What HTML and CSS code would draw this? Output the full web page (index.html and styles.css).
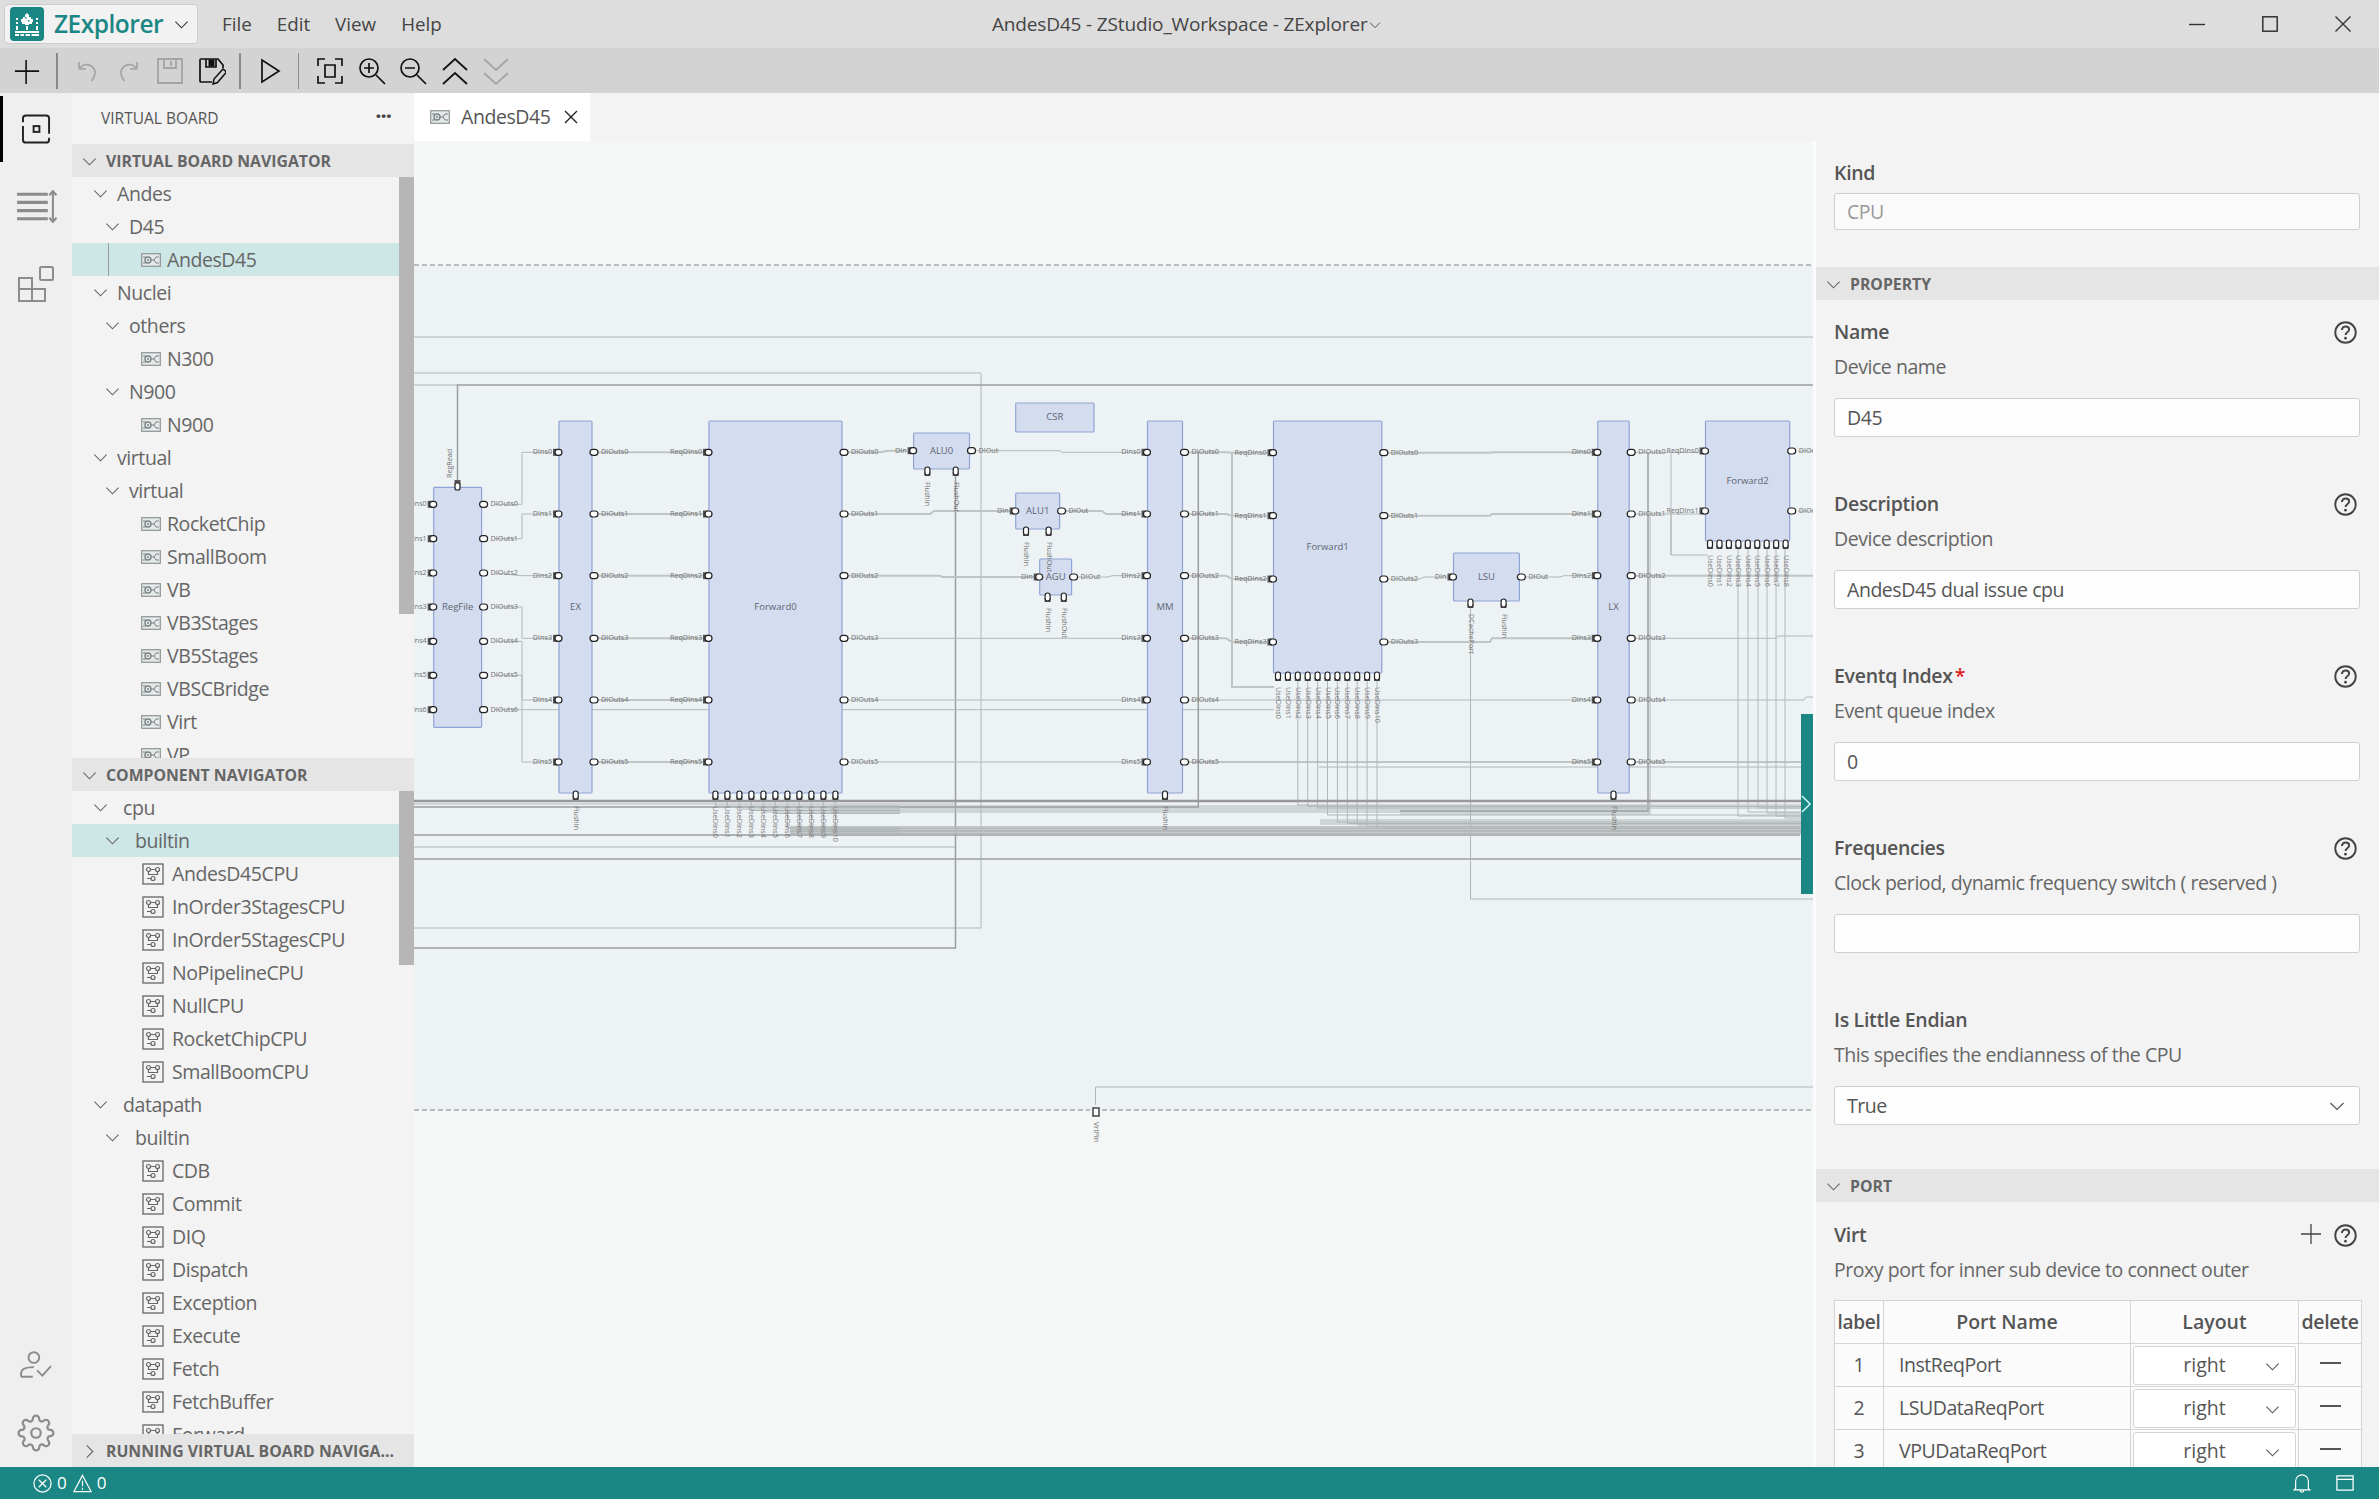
FILE: index.html
```html
<!DOCTYPE html>
<html lang="en">
<head>
<meta charset="utf-8">
<title>AndesD45 - ZStudio_Workspace - ZExplorer</title>
<link rel="stylesheet" href="styles.css">
</head>
<body>
<svg class="defs" width="0" height="0" aria-hidden="true">
  <symbol id="chev-d" viewBox="0 0 16 16"><path d="M1.5 5 8 11.5 14.5 5" fill="none" stroke="currentColor" stroke-width="1.2"/></symbol>
  <symbol id="chev-r" viewBox="0 0 16 16"><path d="M5 1.5 11.5 8 5 14.5" fill="none" stroke="currentColor" stroke-width="1.2"/></symbol>
  <symbol id="chip" viewBox="0 0 20 14"><rect x=".7" y=".7" width="18.6" height="12.6" fill="#e4e8e8" stroke="#8d9494" stroke-width="1.2"/><circle cx="7" cy="7" r="3" fill="none" stroke="#7d8484" stroke-width="1.4"/><circle cx="7" cy="7" r="1" fill="#7d8484"/><path d="M2 4h3M2 10h3M10 7h3l2-3h3M13 7l2 3h3" fill="none" stroke="#7d8484"/></symbol>
  <symbol id="comp" viewBox="0 0 22 22"><rect x="1" y="1" width="20" height="20" fill="none" stroke="#666" stroke-width="1.3"/><circle cx="6.5" cy="6.5" r="2" fill="none" stroke="#666" stroke-width="1.2"/><circle cx="15.5" cy="6.5" r="2" fill="none" stroke="#666" stroke-width="1.2"/><circle cx="11" cy="15.500" r="2" fill="none" stroke="#666" stroke-width="1.2"/><path d="M8.5 6.500h5M6.500 8.500v3h9v-3M9 15.500H5" fill="none" stroke="#666" stroke-width="1.2"/></symbol>
  <symbol id="help" viewBox="0 0 22 22"><circle cx="11" cy="11" r="9.8" fill="none" stroke="#444" stroke-width="1.8"/><path d="M7.600 8.600c0-2 1.500-3.400 3.500-3.400s3.400 1.200 3.400 3c0 2.700-3.500 2.500-3.500 5.200" fill="none" stroke="#444" stroke-width="1.9"/><circle cx="11" cy="16.400" r="1.300" fill="#444"/></symbol>
</svg>

<div class="app">
  <header class="titlebar">
    <div class="brand">
      <svg class="logo" viewBox="0 0 34 34"><rect width="34" height="34" rx="4" fill="#1b8784"/><g fill="#fff"><path d="M17 6l2 2v2h2v2h2v3h-1v2h-3v1h-4v-1h-3v-2h-1v-3h2v-2h2V8z"/><rect x="6" y="11" width="2" height="2"/><rect x="6" y="15" width="2" height="2"/><rect x="26" y="11" width="2" height="2"/><rect x="26" y="15" width="2" height="2"/><rect x="16" y="19" width="2" height="4"/><rect x="6" y="19" width="2" height="4"/><rect x="26" y="19" width="2" height="4"/><rect x="5" y="24" width="24" height="2"/><rect x="5" y="27" width="24" height="2"/></g><g fill="#1b8784"><rect x="15" y="10" width="1.500" height="1.500"/><rect x="18" y="13" width="1.500" height="1.500"/><rect x="9" y="27" width="1.500" height="2"/><rect x="14" y="27" width="1.500" height="2"/><rect x="20" y="27" width="1.500" height="2"/></g></svg>
      <span class="brand-name">ZExplorer</span>
      <svg class="brand-chev"><use href="#chev-d"/></svg>
    </div>
    <nav class="menu"><span>File</span><span>Edit</span><span>View</span><span>Help</span></nav>
    <div class="doc-title">AndesD45 - ZStudio_Workspace - ZExplorer<svg class="title-chev"><use href="#chev-d"/></svg></div>
    <div class="winctl">
      <svg viewBox="0 0 16 16"><path d="M0 8.500h16" stroke="#333" stroke-width="1.400"/></svg>
      <svg viewBox="0 0 16 16"><rect x=".8" y=".8" width="14.400" height="14.400" fill="none" stroke="#333" stroke-width="1.500"/></svg>
      <svg viewBox="0 0 16 16"><path d="M.5.500l15 15M15.500.500l-15 15" stroke="#333" stroke-width="1.400"/></svg>
    </div>
  </header>

  <div class="toolbar">
    <svg class="tb"><path d="M13 1v26M1 13h26" stroke="#111" stroke-width="1.700" fill="none" transform="translate(2 2) scale(.93)"/></svg>
    <i class="sep"></i>
    <svg class="tb off"><path d="M5 11V4M5 11h7M5.500 10.500C9 6 14 5.500 18 8.500c4.500 3.500 3.500 10-.5 14.500" transform="translate(1 1)"/></svg>
    <svg class="tb off"><path d="M23 11V4M23 11h-7M22.500 10.500C19 6 14 5.500 10 8.500c-4.500 3.500-3.500 10 .5 14.500" transform="translate(-1 1)"/></svg>
    <svg class="tb off"><path d="M2 2h24v24H2zM8 2v9h12V2M15 4v5" stroke-width="1.800"/></svg>
    <svg class="tb dark"><path d="M14 25H3a1 1 0 0 1-1-1V3a1 1 0 0 1 1-1h17l5 6v3M8 2v8h10V2" stroke-width="1.700"/><rect x="11" y="3" width="5" height="6" fill="#111"/><path d="M15 27l1-5 9-10 3.500 3-9 10.500z" stroke-width="1.500"/></svg>
    <i class="sep"></i>
    <svg class="tb dark"><path d="M6 3v22l17-11z" stroke-width="1.700"/></svg>
    <i class="sep thin"></i>
    <svg class="tb dark"><path d="M2 9V2h7M19 2h7v7M26 19v7h-7M9 26H2v-7M9 8h10v12H9z" stroke-width="1.700"/></svg>
    <svg class="tb dark"><circle cx="11" cy="11" r="9" stroke-width="1.700"/><path d="M11 6v10M6 11h10M18 18l9 9" stroke-width="1.700"/></svg>
    <svg class="tb dark"><circle cx="11" cy="11" r="9" stroke-width="1.700"/><path d="M6 11h10M18 18l9 9" stroke-width="1.700"/></svg>
    <svg class="tb dark"><path d="M2 13 14 2l12 11M2 27l12-11 12 11" stroke-width="1.700"/></svg>
    <svg class="tb off"><path d="M2 2l12 11L26 2M2 16l12 11 12-11" stroke-width="1.700"/></svg>
  </div>

  <main class="main">
    <aside class="activity">
      <div class="act-item active"><svg viewBox="0 0 30 30"><path d="M4 1h21a3 3 0 0 1 3 3v16M28 24v2a3 3 0 0 1-3 3H4a3 3 0 0 1-3-3V12M1 8V4a3 3 0 0 1 3-3" fill="none" stroke="#222" stroke-width="2"/><rect x="12" y="12" width="6" height="6" fill="none" stroke="#222" stroke-width="2"/></svg></div>
      <div class="act-item"><svg viewBox="0 0 40 32"><path d="M1 4h30M1 12h30M1 20h30M1 28h30" stroke="#8c8c8c" stroke-width="3"/><path d="M36 1v30M32.500 5 36 1l3.500 4M32.500 27l3.500 4 3.500-4" stroke="#8c8c8c" stroke-width="2" fill="none"/></svg></div>
      <div class="act-item"><svg viewBox="0 0 36 36"><path d="M1 12h13v11h13v12H1zM1 23h13v12" fill="none" stroke="#8c8c8c" stroke-width="2"/><rect x="22" y="1" width="13" height="13" rx="1.500" fill="none" stroke="#8c8c8c" stroke-width="2"/></svg></div>
      <div class="act-spacer"></div>
      <div class="act-item small"><svg viewBox="0 0 30 26"><circle cx="13" cy="6" r="5" fill="none" stroke="#8c8c8c" stroke-width="1.800"/><path d="M1 24v-3c0-4 4-6 12-6M1 24h11M16 18l5 5 8-9" fill="none" stroke="#8c8c8c" stroke-width="1.800"/></svg></div>
      <div class="act-item small"><svg viewBox="0 0 24 24"><path fill="none" stroke="#8c8c8c" stroke-width="1.400" d="M19.400 15a1.650 1.650 0 0 0 .33 1.820l.06.06a2 2 0 0 1 0 2.830 2 2 0 0 1-2.830 0l-.06-.06a1.650 1.650 0 0 0-1.820-.33 1.650 1.650 0 0 0-1 1.510V21a2 2 0 0 1-2 2 2 2 0 0 1-2-2v-.09A1.650 1.650 0 0 0 9 19.400a1.650 1.650 0 0 0-1.820.33l-.06.06a2 2 0 0 1-2.830 0 2 2 0 0 1 0-2.830l.06-.06a1.650 1.650 0 0 0 .33-1.820 1.650 1.650 0 0 0-1.510-1H3a2 2 0 0 1-2-2 2 2 0 0 1 2-2h.09A1.650 1.650 0 0 0 4.600 9a1.650 1.650 0 0 0-.33-1.820l-.06-.06a2 2 0 0 1 0-2.830 2 2 0 0 1 2.830 0l.06.06a1.650 1.650 0 0 0 1.820.33H9a1.650 1.650 0 0 0 1-1.510V3a2 2 0 0 1 2-2 2 2 0 0 1 2 2v.09a1.650 1.650 0 0 0 1 1.510 1.650 1.650 0 0 0 1.820-.33l.06-.06a2 2 0 0 1 2.830 0 2 2 0 0 1 0 2.830l-.06.06a1.650 1.650 0 0 0-.33 1.820V9a1.650 1.650 0 0 0 1.510 1H21a2 2 0 0 1 2 2 2 2 0 0 1-2 2h-.09a1.650 1.650 0 0 0-1.510 1z"/><circle cx="12" cy="12" r="3" fill="none" stroke="#8c8c8c" stroke-width="1.400"/></svg></div>
    </aside>

    <section class="sidebar">
      <div class="side-head"><span>VIRTUAL BOARD</span><b class="dots">···</b></div>
      <div class="sect"><svg class="ch"><use href="#chev-d"/></svg>VIRTUAL BOARD NAVIGATOR</div>
      <div class="tree tree-a">
        <i class="thumb thumb-a"></i>
        <div class="row p1"><svg class="ch"><use href="#chev-d"/></svg>Andes</div>
        <div class="row p2"><svg class="ch"><use href="#chev-d"/></svg>D45</div>
        <div class="row leaf sel guide"><svg class="chip"><use href="#chip"/></svg>AndesD45</div>
        <div class="row p1"><svg class="ch"><use href="#chev-d"/></svg>Nuclei</div>
        <div class="row p2"><svg class="ch"><use href="#chev-d"/></svg>others</div>
        <div class="row leaf"><svg class="chip"><use href="#chip"/></svg>N300</div>
        <div class="row p2"><svg class="ch"><use href="#chev-d"/></svg>N900</div>
        <div class="row leaf"><svg class="chip"><use href="#chip"/></svg>N900</div>
        <div class="row p1"><svg class="ch"><use href="#chev-d"/></svg>virtual</div>
        <div class="row p2"><svg class="ch"><use href="#chev-d"/></svg>virtual</div>
        <div class="row leaf"><svg class="chip"><use href="#chip"/></svg>RocketChip</div>
        <div class="row leaf"><svg class="chip"><use href="#chip"/></svg>SmallBoom</div>
        <div class="row leaf"><svg class="chip"><use href="#chip"/></svg>VB</div>
        <div class="row leaf"><svg class="chip"><use href="#chip"/></svg>VB3Stages</div>
        <div class="row leaf"><svg class="chip"><use href="#chip"/></svg>VB5Stages</div>
        <div class="row leaf"><svg class="chip"><use href="#chip"/></svg>VBSCBridge</div>
        <div class="row leaf"><svg class="chip"><use href="#chip"/></svg>Virt</div>
        <div class="row leaf"><svg class="chip"><use href="#chip"/></svg>VP</div>
      </div>
      <div class="sect"><svg class="ch"><use href="#chev-d"/></svg>COMPONENT NAVIGATOR</div>
      <div class="tree tree-b">
        <i class="thumb thumb-b"></i>
        <div class="row q1"><svg class="ch"><use href="#chev-d"/></svg>cpu</div>
        <div class="row q2 sel"><svg class="ch"><use href="#chev-d"/></svg>builtin</div>
        <div class="row cleaf"><svg class="comp"><use href="#comp"/></svg>AndesD45CPU</div>
        <div class="row cleaf"><svg class="comp"><use href="#comp"/></svg>InOrder3StagesCPU</div>
        <div class="row cleaf"><svg class="comp"><use href="#comp"/></svg>InOrder5StagesCPU</div>
        <div class="row cleaf"><svg class="comp"><use href="#comp"/></svg>NoPipelineCPU</div>
        <div class="row cleaf"><svg class="comp"><use href="#comp"/></svg>NullCPU</div>
        <div class="row cleaf"><svg class="comp"><use href="#comp"/></svg>RocketChipCPU</div>
        <div class="row cleaf"><svg class="comp"><use href="#comp"/></svg>SmallBoomCPU</div>
        <div class="row q1"><svg class="ch"><use href="#chev-d"/></svg>datapath</div>
        <div class="row q2"><svg class="ch"><use href="#chev-d"/></svg>builtin</div>
        <div class="row cleaf"><svg class="comp"><use href="#comp"/></svg>CDB</div>
        <div class="row cleaf"><svg class="comp"><use href="#comp"/></svg>Commit</div>
        <div class="row cleaf"><svg class="comp"><use href="#comp"/></svg>DIQ</div>
        <div class="row cleaf"><svg class="comp"><use href="#comp"/></svg>Dispatch</div>
        <div class="row cleaf"><svg class="comp"><use href="#comp"/></svg>Exception</div>
        <div class="row cleaf"><svg class="comp"><use href="#comp"/></svg>Execute</div>
        <div class="row cleaf"><svg class="comp"><use href="#comp"/></svg>Fetch</div>
        <div class="row cleaf"><svg class="comp"><use href="#comp"/></svg>FetchBuffer</div>
        <div class="row cleaf"><svg class="comp"><use href="#comp"/></svg>Forward</div>
      </div>
      <div class="sect"><svg class="ch"><use href="#chev-r"/></svg>RUNNING VIRTUAL BOARD NAVIGA...</div>
    </section>

    <section class="editor">
      <div class="tabs">
        <div class="tab"><svg class="chip"><use href="#chip"/></svg><span>AndesD45</span><svg class="tab-x" viewBox="0 0 14 14"><path d="M1 1l12 12M13 1 1 13" stroke="#222" stroke-width="1.400"/></svg></div>
      </div>
      <div class="canvas">
        <svg id="diagram" class="diagram" viewBox="414 141 1399 1326"></svg>
        <div class="handle"><svg viewBox="0 0 12 20"><path d="M1 1l9 9-9 9" fill="none" stroke="#dff" stroke-width="1.500"/></svg></div>
      </div>
    </section>

    <aside class="props">
      <div class="kind">
        <div class="lbl">Kind</div>
        <div class="input ro">CPU</div>
      </div>
      <div class="sect pad"><svg class="ch"><use href="#chev-d"/></svg>PROPERTY</div>
      <div class="groups">
        <div class="group">
          <div class="lbl">Name<svg class="help"><use href="#help"/></svg></div>
          <div class="sub">Device name</div>
          <div class="input">D45</div>
        </div>
        <div class="group">
          <div class="lbl">Description<svg class="help"><use href="#help"/></svg></div>
          <div class="sub">Device description</div>
          <div class="input">AndesD45 dual issue cpu</div>
        </div>
        <div class="group">
          <div class="lbl">Eventq Index<em>*</em><svg class="help"><use href="#help"/></svg></div>
          <div class="sub">Event queue index</div>
          <div class="input">0</div>
        </div>
        <div class="group">
          <div class="lbl">Frequencies<svg class="help"><use href="#help"/></svg></div>
          <div class="sub">Clock period, dynamic frequency switch ( reserved )</div>
          <div class="input"></div>
        </div>
        <div class="group last">
          <div class="lbl">Is Little Endian</div>
          <div class="sub">This specifies the endianness of the CPU</div>
          <div class="input sel-input">True<svg class="sel-ch"><use href="#chev-d"/></svg></div>
        </div>
      </div>
      <div class="sect pad"><svg class="ch"><use href="#chev-d"/></svg>PORT</div>
      <div class="groups port">
        <div class="lbl">Virt<svg class="plus" viewBox="0 0 20 20"><path d="M10 0v20M0 10h20" stroke="#444" stroke-width="1.300"/></svg><svg class="help"><use href="#help"/></svg></div>
        <div class="sub">Proxy port for inner sub device to connect outer</div>
        <table class="ports">
          <thead><tr><th class="c1">label</th><th class="c2">Port Name</th><th class="c3">Layout</th><th class="c4">delete</th></tr></thead>
          <tbody>
            <tr><td class="num">1</td><td class="name">InstReqPort</td><td class="lay"><div class="mini">right<svg><use href="#chev-d"/></svg></div></td><td class="del"><i></i></td></tr>
            <tr><td class="num">2</td><td class="name">LSUDataReqPort</td><td class="lay"><div class="mini">right<svg><use href="#chev-d"/></svg></div></td><td class="del"><i></i></td></tr>
            <tr><td class="num">3</td><td class="name">VPUDataReqPort</td><td class="lay"><div class="mini">right<svg><use href="#chev-d"/></svg></div></td><td class="del"><i></i></td></tr>
          </tbody>
        </table>
      </div>
    </aside>
  </main>

  <footer class="status">
    <svg class="st-ic" viewBox="0 0 20 20"><circle cx="10" cy="10" r="9" fill="none" stroke="#fff" stroke-width="1.300"/><path d="M6 6l8 8M14 6l-8 8" stroke="#fff" stroke-width="1.300"/></svg><span>0</span>
    <svg class="st-ic" viewBox="0 0 20 20"><path d="M10 1.500 19 18.500H1zM10 7v6M10 14.500v2" fill="none" stroke="#fff" stroke-width="1.300"/></svg><span>0</span>
    <div class="st-right">
      <svg viewBox="0 0 18 22"><path d="M2 17V9a7 7 0 0 1 14 0v8l1.500 1.500h-17zM7 19a2 2 0 0 0 4 0" fill="none" stroke="#fff" stroke-width="1.300"/></svg>
      <svg viewBox="0 0 20 20"><path d="M1 2h18v16H1zM1 6h18" fill="none" stroke="#fff" stroke-width="1.400"/></svg>
    </div>
  </footer>
</div>
<script src="app.js"></script>
</body>
</html>
```

FILE: styles.css
```css
* { box-sizing: border-box; }
html, body { margin: 0; height: 100%; overflow: hidden; }
body { font: 20px/1.2 "Open Sans", "Noto Sans", sans-serif; color: #555; background: #f3f3f3; }
.defs { position: absolute; }
.app { display: flex; flex-direction: column; height: 100vh; }

.titlebar { height: 48px; flex: none; background: #dddddd; display: flex; align-items: center; position: relative; padding-left: 4px; }
.brand { width: 194px; height: 40px; background: #f2f2f2; border: 1px solid #ccc; border-radius: 4px; display: flex; align-items: center; padding-left: 5px; }
.logo { width: 34px; height: 34px; flex: none; }
.brand-name { font-weight: 600; font-size: 24.500px; color: #1b8784; margin-left: 10px; letter-spacing: -.5px; }
.brand-chev { width: 15px; height: 15px; margin-left: 11px; color: #333; }
.menu { display: flex; gap: 0; margin-left: 24px; color: #444; font-size: 18.800px; }
.menu span { margin-right: 25px; }
.doc-title { position: absolute; left: 992px; top: 13px; font-size: 19px; color: #444; white-space: nowrap; letter-spacing: -.15px; }
.title-chev { width: 12px; height: 12px; color: #444; margin-left: 1px; }
.winctl { margin-left: auto; display: flex; gap: 57px; padding-right: 28px; }
.winctl svg { width: 16px; height: 16px; }

.toolbar { height: 45px; flex: none; background: #d3d3d3; display: flex; align-items: center; padding-left: 12px; }
.tb { width: 28px; height: 28px; margin-right: 13.600px; flex: none; fill: none; }
.tb.off { stroke: #a4a4a4; stroke-width: 1.700; }
.tb.dark { stroke: #111; }
.tb:first-child { margin-right: 16px; }
.sep { width: 2px; height: 36px; background: #8a8a8a; margin-right: 15px; flex: none; }
.sep.thin { width: 1px; margin: 0 17px 0 0; }

.main { flex: 1; min-height: 0; display: flex; }
.activity { width: 72px; flex: none; background: #efefef; display: flex; flex-direction: column; }
.act-item { height: 78px; display: flex; align-items: center; justify-content: center; position: relative; }
.act-item svg { width: 29px; height: 30px; }
.act-item:nth-child(2) { margin-top: 2px; }
.act-item:nth-child(2) svg { width: 41px; height: 33px; }
.act-item:nth-child(3) svg { width: 36px; height: 36px; }
.act-item.active { margin-top: 0; height: 72px; }
.act-item.active::before { content: ""; position: absolute; left: 0; top: 3px; width: 3px; height: 66px; background: #000; }
.act-spacer { flex: 1; }
.act-item.small { height: 68px; }
.act-item.small svg { width: 32px; height: 34px; }
.act-item.small:last-child svg { width: 38px; height: 40px; }

.sidebar { width: 342px; flex: none; background: #f3f3f3; display: flex; flex-direction: column; }
.side-head { height: 51px; display: flex; align-items: center; justify-content: space-between; padding: 0 23px 0 29px; font-size: 15.500px; color: #555; }
.dots { font-size: 22px; letter-spacing: -1px; color: #444; font-weight: 700; margin-top: -6px; }
.sect { height: 33px; flex: none; background: #e5e5e5; display: flex; align-items: center; font-weight: 700; font-size: 15.800px; color: #666; padding-left: 10px; padding-top: 1px; white-space: nowrap; }
.sect .ch { margin-right: 9px; }
.sect.pad { padding-left: 10px; }
.ch { width: 15px; height: 15px; color: #666; flex: none; }
.tree { position: relative; overflow: hidden; flex: none; }
.tree-a { height: 581px; }
.tree-b { height: 643px; }
.thumb { position: absolute; right: 0; top: 0; width: 15px; background: #b6b6b6; z-index: 2; }
.thumb-a { height: 437px; }
.thumb-b { height: 174px; }
.row { height: 33px; display: flex; align-items: center; white-space: nowrap; font-size: 19.500px; color: #666; position: relative; letter-spacing: -.42px; }
.row .ch { margin-right: 9px; }
.p1 { padding-left: 21px; }
.p2 { padding-left: 33px; }
.q1 { padding-left: 21px; }
.q2 { padding-left: 33px; }
.row.q2 .ch, .row.q1 .ch { margin-right: 15px; }
.leaf { padding-left: 69px; }
.cleaf { padding-left: 70px; }
.chip { width: 20px; height: 14px; margin-right: 6px; flex: none; }
.comp { width: 22px; height: 22px; margin-right: 8px; flex: none; }
.sel { background: #cde6e6; }
.guide::before { content: ""; position: absolute; left: 36px; top: 0; bottom: 0; width: 1px; background: #999; }

.editor { width: 1402px; flex: none; display: flex; flex-direction: column; min-height: 0; }
.tabs { height: 48px; flex: none; background: #f3f3f3; display: flex; }
.tab { width: 176px; background: #fff; display: flex; align-items: center; padding-left: 16px; font-size: 19.500px; color: #555; }
.tab span { margin-left: 5px; letter-spacing: -.42px; }
.tab-x { width: 14px; height: 14px; margin-left: 13px; }
.canvas { flex: 1; min-height: 0; position: relative; background: #f3f7f6; border-right: 3px solid #fbfbfb; }
.diagram { display: block; width: 1399px; height: 1326px; }
.handle { position: absolute; right: 0; top: 573px; width: 12px; height: 180px; background: #1b8784; display: flex; align-items: center; }
.handle svg { width: 11px; height: 18px; }

.props { flex: 1; min-width: 0; overflow: hidden; background: #f3f3f3; display: flex; flex-direction: column; }
.kind { height: 174px; flex: none; padding: 62px 19px 0 18px; }
.kind .input { margin-top: 4px; height: 37px; }
.groups { padding: 14px 19px 0 18px; flex: none; }
.group { margin-bottom: 49px; }
.group.last { margin-bottom: 44px; }
.lbl { height: 34px; padding-top: 1px; display: flex; align-items: center; font-weight: 600; font-size: 19.500px; color: #555; position: relative; letter-spacing: -.3px; }
.lbl em { color: #e02020; font-style: normal; margin-left: 2px; }
.help { width: 23px; height: 23px; position: absolute; right: 3px; top: 7px; }
.plus { width: 20px; height: 20px; position: absolute; right: 39px; top: 7px; }
.sub { height: 34px; margin-top: 1px; padding-top: 1px; display: flex; align-items: center; font-size: 19.500px; color: #666; letter-spacing: -.45px; white-space: nowrap; }
.input { height: 39px; margin-top: 15px; background: #fdfdfd; border: 1.500px solid #cfcfcf; border-radius: 3px; padding-left: 12px; display: flex; align-items: center; color: #555; font-size: 19.500px; letter-spacing: -.45px; }
.input.ro { background: #fafafa; color: #999; }
.sel-input { justify-content: space-between; padding-right: 14px; }
.sel-ch { width: 16px; height: 16px; color: #555; }
.port { padding-top: 15px; }
.ports { border-collapse: collapse; table-layout: fixed; width: 527px; margin-top: 14px; background: #fbfbfb; font-size: 19.500px; }
.ports th, .ports td { border: 1.500px solid #d4d4d4; padding: 0; height: 43px; font-weight: 600; color: #555; white-space: nowrap; }
.ports td { font-weight: 400; }
.c1 { width: 49px; font-size: 19px; letter-spacing: -.3px; }
.c2 { width: 247px; }
.c3 { width: 168px; }
.c4 { width: 63px; letter-spacing: -.3px; }
.num { text-align: center; }
.name { padding-left: 15px !important; letter-spacing: -.45px; }
.lay { padding: 1px 2px !important; }
.mini { height: 39px; border: 1.500px solid #d4d4d4; border-radius: 3px; background: #fff; display: flex; align-items: center; justify-content: center; position: relative; padding-right: 20px; }
.mini svg { position: absolute; right: 15px; top: 12px; width: 15px; height: 15px; color: #555; }
.del { text-align: center; vertical-align: top; }
.del i { display: block; width: 21px; height: 2px; background: #555; margin: 18px auto 0; }

.status { height: 32px; flex: none; background: #1b8784; color: #fff; display: flex; align-items: center; padding-left: 33px; font-size: 17px; }
.st-ic { width: 19px; height: 19px; margin-right: 5px; }
.status span { margin-right: 6px; }
.st-right { margin-left: auto; display: flex; gap: 25px; padding-right: 25px; align-items: center; }
.st-right svg { width: 18px; height: 20px; }

.lbl-d { font: 7.200px "Open Sans", sans-serif; fill: #727272; }
.name-d { font: 9.500px "Open Sans", sans-serif; fill: #5f6672; text-anchor: middle; dominant-baseline: middle; }
.box { fill: #d4dcef; stroke: #8fa3d6; stroke-width: 1.200; }
.w { fill: none; stroke: #b2b8b9; stroke-width: 1; }
.w2 { fill: none; stroke: #bfc4c5; stroke-width: 2; }
.wd { fill: none; stroke: #9a9e9f; stroke-width: 1.500; }
.wD { fill: none; stroke: #999; stroke-width: 2.500; }
.wb { fill: none; stroke: #b5b9ba; stroke-width: 1.600; }
.dash { fill: none; stroke: #aaa; stroke-width: 1.500; stroke-dasharray: 5 3; }
.band { fill: #edf2f5; }
.pin { fill: #fff; stroke: #222; stroke-width: 1.200; }
.pin-bg { fill: #555; }
```

FILE: app.js
```js
(function () {
  var s = [];
  function P(pts, c) { s.push('<polyline class="' + (c || 'w') + '" points="' + pts.join(' ') + '"/>'); }
  function box(x1, y1, x2, y2, name) {
    s.push('<rect class="box" x="' + x1 + '" y="' + y1 + '" width="' + (x2 - x1) + '" height="' + (y2 - y1) + '" rx="1"/>');
    s.push('<text class="name-d" x="' + (x1 + x2) / 2 + '" y="' + (y1 + y2) / 2 + '">' + name + '</text>');
  }
  function inP(x, y, t) {
    s.push('<rect class="pin-bg" x="' + (x - 6) + '" y="' + (y - 3.5) + '" width="5" height="7"/>');
    s.push('<rect class="pin" x="' + (x - 4) + '" y="' + (y - 3) + '" width="7" height="6" rx="3"/>');
    s.push('<text class="lbl-d" text-anchor="end" x="' + (x - 7) + '" y="' + (y + 2) + '">' + t + '</text>');
  }
  function outP(x, y, t) {
    s.push('<rect class="pin" x="' + (x - 2) + '" y="' + (y - 3) + '" width="8" height="6" rx="3"/>');
    s.push('<text class="lbl-d" x="' + (x + 9) + '" y="' + (y + 2) + '">' + t + '</text>');
  }
  function botP(x, y, t, off) {
    s.push('<rect class="pin-bg" x="' + (x - 3) + '" y="' + (y + 2) + '" width="6" height="4"/>');
    s.push('<rect class="pin" x="' + (x - 2.5) + '" y="' + (y - 3) + '" width="5" height="8" rx="2.500"/>');
    var ty = y + (off || 10);
    s.push('<text class="lbl-d" transform="translate(' + (x - 2) + ' ' + ty + ') rotate(90)">' + t + '</text>');
  }
  var i;

  /* background band + frame */
  s.push('<rect class="band" x="414" y="265" width="1399" height="845"/>');
  P([414, 265, 1813, 265], 'dash');
  P([414, 1110, 1090, 1110], 'dash');
  P([1102, 1110, 1813, 1110], 'dash');
  P([414, 337, 1813, 337], 'w');
  P([414, 373, 981, 373, 981, 928, 414, 928], 'w');
  P([414, 385, 458, 385], 'w');
  P([457.5, 482, 457.5, 385, 1813, 385], 'wd');
  P([955.5, 475, 955.5, 948, 414, 948], 'wd');
  P([1095.5, 1105, 1095.5, 1087, 1813, 1087], 'w');
  P([414, 859, 1813, 859], 'wd');
  P([414, 847, 955, 847], 'w');
  P([414, 835, 1800, 835], 'wd');

  /* main buses */
  P([414, 804, 955, 804], 'w');
  [806, 808, 810, 812].forEach(function (y) { P([830, y, 1649, y], 'w'); });
  [827, 828.6, 830.2, 831.8, 833.4].forEach(function (y) { P([790, y, 1801, y], 'wb'); });
  [820, 822, 824].forEach(function (y) { P([1320, y, 1801, y], 'w'); });

  /* regfile -> EX */
  P([495, 504.3, 522, 504.3, 522, 452.3, 552, 452.3]);
  P([495, 538.7, 522, 538.7, 522, 514, 552, 514]);
  P([495, 573, 522, 575.7, 552, 575.7]);
  P([495, 607, 522, 607, 522, 638.3, 552, 638.3]);
  P([495, 641.3, 522, 641.3, 522, 762, 552, 762]);
  P([495, 675.3, 522, 675.3, 522, 700, 552, 700]);
  P([495, 709.7, 1274, 709.7]);

  [452.3, 514, 575.7, 638.3, 700, 762].forEach(function (y) { P([598, y, 703, y], 'w2'); });
  P([848, 452.3, 880, 452.3, 888, 450.7, 907, 450.7], 'w2');
  P([848, 514, 930, 514, 934, 511, 1010, 511], 'w2');
  P([848, 575.7, 940, 575.7, 942, 577, 1035, 577], 'w2');
  P([848, 638.3, 1141, 638.3], 'w');
  P([848, 700, 1141, 700], 'w');
  P([848, 762, 1141, 762], 'w');
  P([975, 450.7, 1060, 450.7, 1062, 452.3, 1141, 452.3], 'w');
  P([1065, 511, 1102, 511, 1106, 514, 1141, 514], 'w2');
  P([1078, 577, 1108, 577, 1112, 575.7, 1141, 575.7], 'w');

  /* MM -> Forward1 / outer */
  [[452.3, 452.7], [514, 515.7], [575.7, 579], [638.3, 642]].forEach(function (p) { P([1188, p[0], 1226, p[0], 1232, p[1], 1267, p[1]], 'w2'); });
  P([1182, 700, 1592, 700], 'w');
  P([1182, 762, 1592, 762], 'w2');
  P([1198.3, 452.3, 1198.3, 807, 414, 807], 'wd');
  P([1232, 452.7, 1232, 687, 1274, 687], 'w2');
  P([1319, 767, 1801, 767], 'w');

  /* Forward1 -> LX */
  P([1388, 452.7, 1490, 452.7, 1492, 452.3, 1592, 452.3], 'w2');
  P([1388, 515.7, 1490, 515.7, 1492, 514, 1592, 514], 'w2');
  P([1388, 579, 1420, 579, 1424, 577, 1447, 577], 'w');
  P([1525, 577, 1560, 577, 1564, 575.7, 1592, 575.7], 'w');
  P([1388, 642, 1490, 642, 1492, 638.3, 1592, 638.3], 'w2');
  P([1470.5, 607, 1470.5, 899, 1813, 899], 'w');

  /* LX -> Forward2 / right */
  P([1648, 452.3, 1648, 811, 1400, 811], 'wd');
  P([1650, 514, 1650, 814, 1400, 814], 'w');
  P([1671, 452.3, 1671, 555, 1708, 555], 'w');
  P([1671, 514, 1671, 555], 'w');
  P([1635, 452.3, 1699, 452.3], 'w');
  P([1635, 514, 1699, 514], 'w');
  P([1635, 575.7, 1813, 575.7], 'w2');
  P([1635, 638.3, 1776, 638.3, 1778, 636, 1813, 636], 'w');
  P([1635, 700, 1804, 700, 1806, 697, 1813, 697], 'w');
  P([1635, 762, 1801, 762], 'w2');
  P([1798, 451, 1813, 451], 'w');
  P([1798, 511, 1813, 511], 'w');

  /* use-port wires */
  for (i = 0; i < 11; i++) {
    var fx = 715.4 + 12 * i;
    var fb = i < 6 ? 806 + i * 1.5 : 822 + i;
    P([fx, 797, fx, fb, 900, fb], 'w');
  }
  var fy = [0, 0, 805, 806.500, 808, 815, 822, 823.500, 825, 826.500, 828];
  for (i = 2; i < 11; i++) {
    var gx = 1278 + 9.900 * i;
    P([gx, 677, gx, fy[i], 1801, fy[i]], 'w');
  }
  [[1738, 816], [1748, 812], [1758, 808], [1767, 813], [1776, 816], [1785, 818]].forEach(function (p) {
    P([p[0], 546, p[0], p[1], 1801, p[1]], 'w');
  });
  P([414, 801, 1801, 801], 'wD');

  /* blocks */
  box(433.7, 487.3, 481.6, 727.3, 'RegFile');
  box(559, 421, 592, 793, 'EX');
  box(709, 421, 842, 793, 'Forward0');
  box(913.6, 433, 969.5, 469, 'ALU0');
  box(1015.7, 403, 1094, 432, 'CSR');
  box(1015.7, 493, 1059.6, 529, 'ALU1');
  box(1039.7, 559, 1071.6, 595, 'AGU');
  box(1147.5, 421, 1182.5, 793, 'MM');
  box(1273.5, 421, 1381.8, 673, 'Forward1');
  box(1453.5, 553, 1519.4, 601, 'LSU');
  box(1597.8, 421, 1629.2, 793, 'LX');
  box(1705.5, 421, 1789.7, 541, 'Forward2');

  /* ports */
  var ry = [504.3, 538.7, 573, 607, 641.3, 675.3, 709.7];
  ry.forEach(function (y, k) { inP(433.7, y, 'DIns' + k); outP(481.6, y, 'DIOuts' + k); });
  var ey = [452.3, 514, 575.7, 638.3, 700, 762];
  ey.forEach(function (y, k) {
    inP(559, y, 'DIns' + k); outP(592, y, 'DIOuts' + k);
    inP(709, y, 'ReqDIns' + k); outP(842, y, 'DIOuts' + k);
    inP(1147.5, y, 'DIns' + k); outP(1182.5, y, 'DIOuts' + k);
    inP(1597.8, y, 'DIns' + k); outP(1629.2, y, 'DIOuts' + k);
  });
  [452.7, 515.7, 579, 642].forEach(function (y, k) { inP(1273.5, y, 'ReqDIns' + k); outP(1381.8, y, 'DIOuts' + k); });
  [451, 511].forEach(function (y, k) { inP(1705.5, y, 'ReqDIns' + k); outP(1789.7, y, 'DIOut' + k); });

  inP(913.6, 450.7, 'DIn'); outP(969.5, 450.7, 'DIOut');
  inP(1015.7, 511, 'DIn'); outP(1059.6, 511, 'DIOut');
  inP(1039.7, 577, 'DIn'); outP(1071.6, 577, 'DIOut');
  inP(1453.5, 577, 'DIn'); outP(1519.4, 577, 'DIOut');

  botP(927.4, 470, 'FlushIn', 12);
  botP(955.7, 470, 'FlushOut', 12);
  botP(1026, 530, 'FlushIn', 12);
  botP(1048.6, 530, 'FlushOut', 12);
  botP(1047.6, 596, 'FlushIn', 12);
  botP(1063.8, 596, 'FlushOut', 12);
  botP(1470.5, 602, 'DCachePort', 12);
  botP(1503.6, 602, 'FlushIn', 12);
  botP(575.7, 794, 'FlushIn', 12);
  botP(1165, 794, 'FlushIn', 12);
  botP(1613.5, 794, 'FlushIn', 12);
  for (i = 0; i < 11; i++) botP(715.4 + 12 * i, 794, 'UseDIns' + i, 12);
  for (i = 0; i < 11; i++) botP(1278 + 9.900 * i, 675, 'UseDIns' + i, 12);
  for (i = 0; i < 9; i++) botP(1710 + 9.450 * i, 543, 'UseDIns' + i, 12);

  /* regfile top port */
  s.push('<rect class="pin-bg" x="454.500" y="480" width="6" height="5"/>');
  s.push('<rect class="pin" x="455" y="483" width="5" height="7" rx="2"/>');
  s.push('<text class="lbl-d" transform="translate(452 478) rotate(-90)">RegRead</text>');

  /* virt port on the bottom dashed line */
  s.push('<rect x="1093" y="1108" width="6" height="8" fill="#fff" stroke="#444" stroke-width="1.500"/>');
  s.push('<text class="lbl-d" transform="translate(1094 1122) rotate(90)">VrtPin</text>');

  document.getElementById('diagram').innerHTML = s.join('');
})();
```
